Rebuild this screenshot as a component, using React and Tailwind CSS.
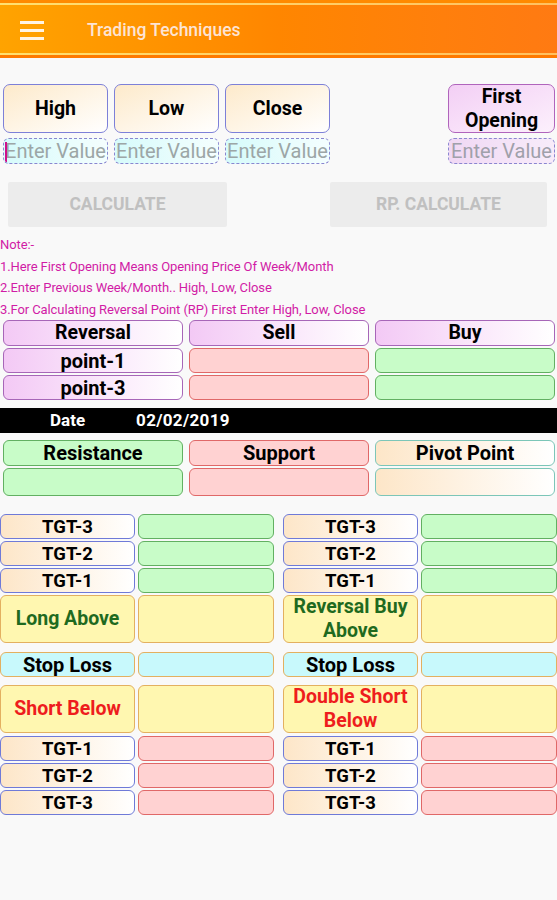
import React from "react";

const F = { fontFamily: "Roboto, 'Liberation Sans', sans-serif" };

function Label({ children, cls = "", text = "text-black" }) {
  return (
    <div className={`flex items-center justify-center rounded-[6px] border-[1.5px] font-bold leading-[22px] text-center ${text} ${cls}`}>
      {children}
    </div>
  );
}

function TgtLabel({ t }) {
  return (
    <Label cls="h-[25px] text-[18.5px] border-[#6f7ad8] bg-linear-to-r from-[#fde6c8] to-white">{t}</Label>
  );
}
function GreenCell({ h = "h-[25px]" }) {
  return <div className={`${h} rounded-[6px] border-[1.5px] border-[#62b062] bg-[#c8fcc8]`} />;
}
function RedCell({ h = "h-[25px]" }) {
  return <div className={`${h} rounded-[6px] border-[1.5px] border-[#e06868] bg-[#ffd2d2]`} />;
}
function YellowCell() {
  return <div className="h-[48px] rounded-[6px] border-[1.5px] border-[#e3b060] bg-[#fff7b0]" />;
}

function Half({ right }) {
  return (
    <div className="grid grid-cols-[135px_1fr] gap-x-[3px]">
      <TgtLabel t="TGT-3" />
      <GreenCell />
      <div className="col-span-2 h-[2px]" />
      <TgtLabel t="TGT-2" />
      <GreenCell />
      <div className="col-span-2 h-[2px]" />
      <TgtLabel t="TGT-1" />
      <GreenCell />
      <div className="col-span-2 h-[2px]" />
      <Label cls="h-[48px] text-[19.5px] border-[#e3b060] bg-[#fff7b0]" text="text-[#1f6a1f]">
        {right ? <span className="leading-[24px]">Reversal Buy<br />Above</span> : "Long Above"}
      </Label>
      <YellowCell />
      <div className="col-span-2 h-[9px]" />
      <Label cls="h-[25px] text-[20px] border-[#e3b060] bg-[#c8f9fc]">Stop Loss</Label>
      <div className="h-[25px] rounded-[6px] border-[1.5px] border-[#e3b060] bg-[#c8f9fc]" />
      <div className="col-span-2 h-[8px]" />
      <Label cls="h-[48px] text-[19.5px] border-[#e3b060] bg-[#fff7b0]" text="text-[#ee1d1d]">
        {right ? <span className="leading-[24px]">Double Short<br />Below</span> : "Short Below"}
      </Label>
      <YellowCell />
      <div className="col-span-2 h-[3px]" />
      <TgtLabel t="TGT-1" />
      <RedCell />
      <div className="col-span-2 h-[2px]" />
      <TgtLabel t="TGT-2" />
      <RedCell />
      <div className="col-span-2 h-[2px]" />
      <TgtLabel t="TGT-3" />
      <RedCell />
    </div>
  );
}

export default function App() {
  const topBtn =
    "h-[49px] w-[105px] flex items-center justify-center rounded-[7px] border-[1.5px] border-[#7d80d8] bg-linear-to-br from-[#fdeacb] to-white text-[19.5px] font-bold text-black";
  const input =
    "h-[26px] w-[105px] overflow-hidden whitespace-nowrap rounded-[6px] border border-dashed border-[#8a86d0] bg-linear-to-r from-[#d6fbfb] to-[#f4fefe] text-[20px] leading-[24px] text-[#9ca6a6] text-center";
  const lilac = "border-[#a766b8] bg-linear-to-r from-[#f3c9f5] to-white";
  return (
    <div style={F} className="min-h-[900px] w-[557px] bg-[#f9f9f9]">
      {/* header */}
      <div className="flex h-[58px] flex-col bg-linear-to-r from-[#ffa300] via-[#ff8600] to-[#ff7a12]">
        <div className="h-[3px] bg-[#ff8a00]" />
        <div className="h-[2px] bg-linear-to-r from-[#ffe070] to-[#ffc060]" />
        <div className="flex flex-1 items-center pt-[2px]">
          <div className="ml-[20px] flex w-[24px] flex-col gap-[5px]">
            <div className="h-[3px] bg-[#fff4e4]" />
            <div className="h-[3px] bg-[#fff4e4]" />
            <div className="h-[3px] bg-[#fff4e4]" />
          </div>
          <div className="ml-[43px] text-[17.5px] font-medium text-[#fde4d4]">Trading Techniques</div>
        </div>
        <div className="h-[2px] bg-linear-to-r from-[#ffe070] to-[#ffc060]" />
        <div className="h-[3px] bg-[#ff7a00]" />
      </div>

      {/* top inputs */}
      <div className="mt-[26px] flex px-[3px]">
        <div className="flex flex-col gap-[5px]">
          <div className="flex gap-[6px]">
            <div className={topBtn}>High</div>
            <div className={topBtn}>Low</div>
            <div className={topBtn}>Close</div>
          </div>
          <div className="flex gap-[6px]">
            <div className={`${input} relative`}>
              <span className="absolute left-[1px] top-[3px] h-[20px] w-[2px] bg-[#d0108a]" />
              Enter Value
            </div>
            <div className={input}>Enter Value</div>
            <div className={input}>Enter Value</div>
          </div>
        </div>
        <div className="ml-auto mr-[-1px] flex flex-col gap-[5px]">
          <div className="flex h-[49px] w-[107px] items-center justify-center rounded-[7px] border-[1.5px] border-[#b064bc] bg-linear-to-br from-[#f3cff5] to-[#fcf0fc] text-center text-[19.5px] font-bold leading-[24px] text-black">
            First<br />Opening
          </div>
          <div className="h-[26px] w-[107px] overflow-hidden whitespace-nowrap rounded-[6px] border border-dashed border-[#8a86d0] bg-linear-to-r from-[#f0d8f4] to-[#f8ecfa] text-center text-[20px] leading-[24px] text-[#a0a0aa]">
            Enter Value
          </div>
        </div>
      </div>

      {/* calculate */}
      <div className="mt-[18px] flex px-[8px] pr-[10px]">
        <div className="flex h-[45px] w-[219px] items-center justify-center rounded-[2px] bg-[#ececec] text-[17.5px] font-bold text-[#c0c0c0]">CALCULATE</div>
        <div className="ml-auto flex h-[45px] w-[217px] items-center justify-center rounded-[2px] bg-[#ececec] text-[17.5px] font-bold text-[#c0c0c0]">RP. CALCULATE</div>
      </div>

      {/* notes */}
      <div className="mt-[7px] text-[13px] leading-[21.5px] text-[#d11ca6] tracking-[-0.1px]">
        <div>Note:-</div>
        <div>1.Here First Opening Means Opening Price Of Week/Month</div>
        <div>2.Enter Previous Week/Month.. High, Low, Close</div>
        <div>3.For Calculating Reversal Point (RP) First Enter High, Low, Close</div>
      </div>

      {/* reversal table */}
      <div className="grid grid-cols-3 gap-x-[6px] gap-y-[2px] px-[3px] pr-[2px]">
        <Label cls={`h-[26px] text-[19.5px] ${lilac}`}>Reversal</Label>
        <Label cls={`h-[26px] text-[19.5px] ${lilac}`}>Sell</Label>
        <Label cls={`h-[26px] text-[19.5px] ${lilac}`}>Buy</Label>
        <Label cls={`h-[25px] text-[20px] ${lilac}`}>point-1</Label>
        <RedCell />
        <GreenCell />
        <Label cls={`h-[25px] text-[20px] ${lilac}`}>point-3</Label>
        <RedCell />
        <GreenCell />
      </div>

      {/* date */}
      <div className="mt-[8px] flex h-[25px] items-center bg-black text-[17px] font-bold text-white">
        <span className="ml-[50px]">Date</span>
        <span className="ml-[51px] tracking-[0.3px]">02/02/2019</span>
      </div>

      {/* resistance */}
      <div className="mt-[7px] grid grid-cols-3 gap-x-[6px] gap-y-[2px] px-[3px] pr-[2px]">
        <Label cls="h-[26px] text-[20px] border-[#62b062] bg-[#c8fcc8]">Resistance</Label>
        <Label cls="h-[26px] text-[20px] border-[#e06868] bg-[#ffd2d2]">Support</Label>
        <Label cls="h-[26px] text-[20px] border-[#7cc6b8] bg-linear-to-r from-[#fde6c8] to-white">Pivot Point</Label>
        <GreenCell h="h-[28px]" />
        <RedCell h="h-[28px]" />
        <div className="h-[28px] rounded-[6px] border-[1.5px] border-[#7cc6b8] bg-linear-to-r from-[#fde6c8] to-white" />
      </div>

      {/* targets */}
      <div className="mt-[18px] grid grid-cols-2 gap-x-[9px]">
        <Half />
        <Half right />
      </div>
    </div>
  );
}
